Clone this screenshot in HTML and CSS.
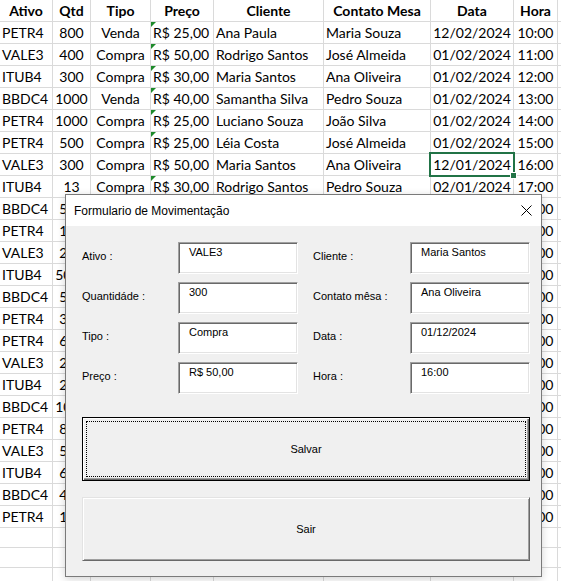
FILE: index.html
```html
<!DOCTYPE html>
<html lang="pt-BR">
<head>
<meta charset="utf-8">
<title>Formulario de Movimentação</title>
<link rel="stylesheet" href="styles.css">
</head>
<body>
<div class="sheet">
  <div class="c h">Ativo</div><div class="c h">Qtd</div><div class="c h">Tipo</div><div class="c h">Preço</div><div class="c h">Cliente</div><div class="c h">Contato Mesa</div><div class="c h">Data</div><div class="c h">Hora</div><div class="c"></div>

  <div class="c">PETR4</div><div class="c m">800</div><div class="c m">Venda</div><div class="c tri">R$ 25,00</div><div class="c">Ana Paula</div><div class="c">Maria Souza</div><div class="c m">12/02/2024</div><div class="c m">10:00</div><div class="c"></div>
  <div class="c">VALE3</div><div class="c m">400</div><div class="c m">Compra</div><div class="c tri">R$ 50,00</div><div class="c">Rodrigo Santos</div><div class="c">José Almeida</div><div class="c m">01/02/2024</div><div class="c m">11:00</div><div class="c"></div>
  <div class="c">ITUB4</div><div class="c m">300</div><div class="c m">Compra</div><div class="c tri">R$ 30,00</div><div class="c">Maria Santos</div><div class="c">Ana Oliveira</div><div class="c m">01/02/2024</div><div class="c m">12:00</div><div class="c"></div>
  <div class="c">BBDC4</div><div class="c m">1000</div><div class="c m">Venda</div><div class="c tri">R$ 40,00</div><div class="c">Samantha Silva</div><div class="c">Pedro Souza</div><div class="c m">01/02/2024</div><div class="c m">13:00</div><div class="c"></div>
  <div class="c">PETR4</div><div class="c m">1000</div><div class="c m">Compra</div><div class="c tri">R$ 25,00</div><div class="c">Luciano Souza</div><div class="c">João Silva</div><div class="c m">01/02/2024</div><div class="c m">14:00</div><div class="c"></div>
  <div class="c">PETR4</div><div class="c m">500</div><div class="c m">Compra</div><div class="c tri">R$ 25,00</div><div class="c">Léia Costa</div><div class="c">José Almeida</div><div class="c m">01/02/2024</div><div class="c m">15:00</div><div class="c"></div>
  <div class="c">VALE3</div><div class="c m">300</div><div class="c m">Compra</div><div class="c">R$ 50,00</div><div class="c">Maria Santos</div><div class="c">Ana Oliveira</div><div class="c m sel">12/01/2024<span class="handle"></span></div><div class="c m">16:00</div><div class="c"></div>
  <div class="c">ITUB4</div><div class="c m">13</div><div class="c m">Compra</div><div class="c tri">R$ 30,00</div><div class="c">Rodrigo Santos</div><div class="c">Pedro Souza</div><div class="c m">02/01/2024</div><div class="c m">17:00</div><div class="c"></div>
  <div class="c">BBDC4</div><div class="c m">500</div><div class="c"></div><div class="c tri"></div><div class="c"></div><div class="c"></div><div class="c"></div><div class="c m">18:00</div><div class="c"></div>
  <div class="c">PETR4</div><div class="c m">100</div><div class="c"></div><div class="c tri"></div><div class="c"></div><div class="c"></div><div class="c"></div><div class="c m">09:00</div><div class="c"></div>
  <div class="c">VALE3</div><div class="c m">200</div><div class="c"></div><div class="c tri"></div><div class="c"></div><div class="c"></div><div class="c"></div><div class="c m">10:00</div><div class="c"></div>
  <div class="c">ITUB4</div><div class="c m">5000</div><div class="c"></div><div class="c tri"></div><div class="c"></div><div class="c"></div><div class="c"></div><div class="c m">11:00</div><div class="c"></div>
  <div class="c">BBDC4</div><div class="c m">500</div><div class="c"></div><div class="c tri"></div><div class="c"></div><div class="c"></div><div class="c"></div><div class="c m">12:00</div><div class="c"></div>
  <div class="c">PETR4</div><div class="c m">300</div><div class="c"></div><div class="c tri"></div><div class="c"></div><div class="c"></div><div class="c"></div><div class="c m">13:00</div><div class="c"></div>
  <div class="c">PETR4</div><div class="c m">600</div><div class="c"></div><div class="c tri"></div><div class="c"></div><div class="c"></div><div class="c"></div><div class="c m">14:00</div><div class="c"></div>
  <div class="c">VALE3</div><div class="c m">200</div><div class="c"></div><div class="c tri"></div><div class="c"></div><div class="c"></div><div class="c"></div><div class="c m">15:00</div><div class="c"></div>
  <div class="c">ITUB4</div><div class="c m">200</div><div class="c"></div><div class="c tri"></div><div class="c"></div><div class="c"></div><div class="c"></div><div class="c m">16:00</div><div class="c"></div>
  <div class="c">BBDC4</div><div class="c m">1000</div><div class="c"></div><div class="c tri"></div><div class="c"></div><div class="c"></div><div class="c"></div><div class="c m">17:00</div><div class="c"></div>
  <div class="c">PETR4</div><div class="c m">800</div><div class="c"></div><div class="c tri"></div><div class="c"></div><div class="c"></div><div class="c"></div><div class="c m">10:00</div><div class="c"></div>
  <div class="c">VALE3</div><div class="c m">500</div><div class="c"></div><div class="c tri"></div><div class="c"></div><div class="c"></div><div class="c"></div><div class="c m">11:00</div><div class="c"></div>
  <div class="c">ITUB4</div><div class="c m">600</div><div class="c"></div><div class="c tri"></div><div class="c"></div><div class="c"></div><div class="c"></div><div class="c m">12:00</div><div class="c"></div>
  <div class="c">BBDC4</div><div class="c m">400</div><div class="c"></div><div class="c tri"></div><div class="c"></div><div class="c"></div><div class="c"></div><div class="c m">13:00</div><div class="c"></div>
  <div class="c">PETR4</div><div class="c m">100</div><div class="c"></div><div class="c tri"></div><div class="c"></div><div class="c"></div><div class="c"></div><div class="c m">14:00</div><div class="c"></div>

  <div class="c"></div><div class="c"></div><div class="c"></div><div class="c"></div><div class="c"></div><div class="c"></div><div class="c"></div><div class="c"></div><div class="c"></div>
  <div class="c"></div><div class="c"></div><div class="c"></div><div class="c"></div><div class="c"></div><div class="c"></div><div class="c"></div><div class="c"></div><div class="c"></div>
  <div class="c"></div><div class="c"></div><div class="c"></div><div class="c"></div><div class="c"></div><div class="c"></div><div class="c"></div><div class="c"></div><div class="c"></div>
</div>

<div class="dlg">
  <div class="dlg-title">
    <span>Formulario de Movimentação</span>
    <svg class="close" width="11" height="11" viewBox="0 0 11 11"><path d="M0.5 0.5 L10.5 10.5 M10.5 0.5 L0.5 10.5" stroke="#000" stroke-width="1" fill="none"/></svg>
  </div>
  <div class="dlg-body">
    <div class="form">
      <div class="lbl">Ativo :</div><div class="box">VALE3</div>
      <div class="lbl r">Cliente :</div><div class="box">Maria Santos</div>
      <div class="lbl">Quantidáde :</div><div class="box">300</div>
      <div class="lbl r">Contato mêsa :</div><div class="box">Ana Oliveira</div>
      <div class="lbl">Tipo :</div><div class="box">Compra</div>
      <div class="lbl r">Data :</div><div class="box">01/12/2024</div>
      <div class="lbl">Preço :</div><div class="box">R$ 50,00</div>
      <div class="lbl r">Hora :</div><div class="box">16:00</div>
    </div>
    <button class="btn def">Salvar</button>
    <button class="btn">Sair</button>
  </div>
</div>
</body>
</html>
```

FILE: styles.css
```css
html, body {
  margin: 0;
  padding: 0;
  background: #fff;
  overflow: hidden;
}
body {
  width: 561px;
  height: 581px;
  position: relative;
  font-family: Lato, "Liberation Sans", sans-serif;
}

.sheet {
  display: grid;
  grid-template-columns: 53px 38px 60px 63px 110px 107px 83px 44px 1fr;
  grid-template-rows: repeat(24, 22px) repeat(3, 20px);
}
.c {
  box-sizing: border-box;
  border-right: 1px solid #dadada;
  border-bottom: 1px solid #dadada;
  font-size: 14px;
  line-height: 21px;
  padding: 0 2px;
  white-space: nowrap;
  overflow: hidden;
  color: #000;
}
.h {
  font-weight: bold;
  text-align: center;
  padding-top: 1px;
  line-height: 20px;
}
.m {
  text-align: center;
  text-overflow: clip;
}
.tri {
  position: relative;
}
.tri::before {
  content: "";
  position: absolute;
  left: 0;
  top: 0;
  border-style: solid;
  border-width: 5px 5px 0 0;
  border-color: #1d8a2a transparent transparent transparent;
}
.sel {
  position: relative;
  overflow: visible;
  z-index: 2;
}
.sel::after {
  content: "";
  position: absolute;
  left: -2px;
  top: -2px;
  right: -2px;
  bottom: -2px;
  border: 2px solid #217346;
}
.handle {
  position: absolute;
  right: -3px;
  bottom: -3px;
  width: 5px;
  height: 5px;
  background: #217346;
  box-shadow: 0 0 0 1px #fff;
  z-index: 3;
}

.dlg {
  position: absolute;
  left: 65px;
  top: 194px;
  width: 477px;
  height: 383px;
  box-sizing: border-box;
  border: 1px solid #7a7a7a;
  background: #f0f0f0;
  font-family: "Liberation Sans", Arial, sans-serif;
  color: #000;
  display: flex;
  flex-direction: column;
  box-shadow: 0 2px 8px rgba(0, 0, 0, 0.18);
  z-index: 10;
}
.dlg-title {
  height: 31px;
  flex: none;
  background: #fff;
  display: flex;
  align-items: center;
  justify-content: space-between;
  padding: 0 9px 0 8px;
  font-size: 12px;
}
.close {
  display: block;
  margin-top: -1px;
}
.dlg-body {
  flex: 1;
  padding: 16px 10px 15px 16px;
  display: flex;
  flex-direction: column;
}
.form {
  display: grid;
  grid-template-columns: 96px 120px 112px 120px;
  grid-template-rows: repeat(4, 32px);
  row-gap: 8px;
}
.lbl {
  font-size: 11px;
  line-height: 13px;
  align-self: center;
  padding-bottom: 4px;
}
.lbl.r {
  padding-left: 15px;
}
.box {
  box-sizing: border-box;
  height: 32px;
  background: #fff;
  border: 1px solid;
  border-color: #a0a0a0 #fff #fff #a0a0a0;
  box-shadow: inset 1px 1px #696969, inset -1px -1px #e3e3e3;
  font-size: 11px;
  line-height: 13px;
  padding: 3px 10px 0;
  white-space: nowrap;
}
.btn {
  appearance: none;
  box-sizing: border-box;
  width: 448px;
  height: 64px;
  margin: 16px 0 0;
  padding: 0;
  background: #f0f0f0;
  font-family: "Liberation Sans", Arial, sans-serif;
  font-size: 11px;
  color: #000;
  border: 1px solid;
  border-color: #e3e3e3 #696969 #696969 #e3e3e3;
  box-shadow: inset 1px 1px #fff, inset -1px -1px #a0a0a0;
  display: flex;
  align-items: center;
  justify-content: center;
}
.btn.def {
  margin-top: 23px;
  border-color: #000;
  box-shadow: inset 1px 1px #fff, inset -1px -1px #696969, inset -2px -2px #a0a0a0;
  outline: 1px dotted #000;
  outline-offset: -5px;
}
```
